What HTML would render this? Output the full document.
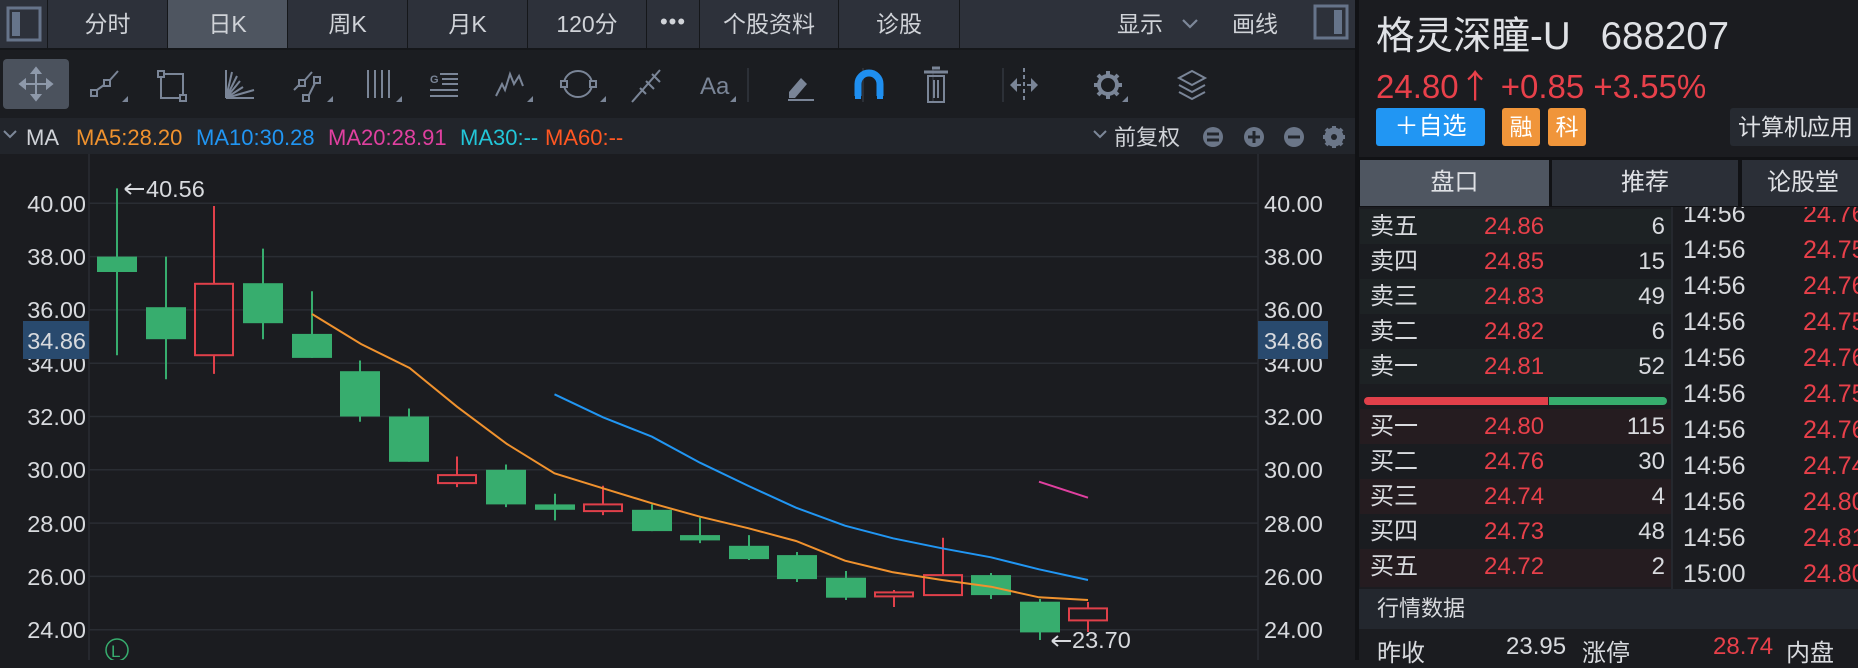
<!DOCTYPE html>
<html><head><meta charset="utf-8"><style>
*{margin:0;padding:0;box-sizing:border-box}
body{width:1858px;height:660px;background:#1b1c20;overflow:hidden;position:relative;font-family:"Liberation Sans","Noto Sans CJK SC",sans-serif;color:#d8dade}
.abs{position:absolute}
.tab{position:absolute;top:0;height:48px;background:#2d313a;color:#d0d3d8;font-size:23px;line-height:48px;text-align:center}
.r{color:#e8404a}
.row{position:absolute;left:1360px;width:311px;height:35px;font-size:24px;line-height:35px}
.row .l{position:absolute;left:10px}
.row .p{position:absolute;left:124px;color:#e8404a}
.row .v{position:absolute;right:6px}
.tr{position:relative;font-size:25px;height:36px;line-height:36px;width:200px}
.tr .p{position:absolute;left:120px;color:#e8404a}
</style></head><body>
<div class="abs" style="left:0;top:0;width:1359px;height:50px;background:#15171a"></div>
<div class="tab" style="left:0;width:47px"></div>
<svg class="abs" style="left:6px;top:6px" width="36" height="36"><rect x="2" y="2" width="32" height="32" fill="none" stroke="#66748a" stroke-width="3"/><rect x="6" y="6" width="8" height="24" fill="#66748a"/></svg>
<div class="tab" style="left:48px;width:119px">分时</div>
<div class="tab" style="left:168px;width:119px;background:#4e5560">日K</div>
<div class="tab" style="left:288px;width:119px">周K</div>
<div class="tab" style="left:408px;width:119px">月K</div>
<div class="tab" style="left:528px;width:118px">120分</div>
<div class="tab" style="left:647px;width:52px;font-size:22px;letter-spacing:1px;line-height:44px">•••</div>
<div class="tab" style="left:700px;width:138px">个股资料</div>
<div class="tab" style="left:839px;width:120px">诊股</div>
<div class="tab" style="left:960px;width:399px"></div>
<div class="abs" style="left:1117px;top:0;line-height:48px;font-size:23px;color:#d0d3d8">显示</div>
<svg class="abs" style="left:1180px;top:16px" width="20" height="16"><path d="M3 4 L10 11 L17 4" fill="none" stroke="#7d8899" stroke-width="2.2"/></svg>
<div class="abs" style="left:1232px;top:0;line-height:48px;font-size:23px;color:#d0d3d8">画线</div>
<svg class="abs" style="left:1313px;top:4px" width="38" height="38"><rect x="2" y="2" width="32" height="32" fill="none" stroke="#66748a" stroke-width="3"/><rect x="21" y="6" width="8" height="24" fill="#66748a"/></svg>

<div class="abs" style="left:0;top:50px;width:1359px;height:68px;background:#1b1d21"></div>
<div class="abs" style="left:3px;top:59px;width:66px;height:50px;background:#4b525d;border-radius:4px"></div>
<svg class="abs" style="left:0;top:50px" width="1359" height="68" fill="none" stroke="#7a8597" stroke-width="2">
<g stroke="#8e99aa"><path d="M20 34H52M36 18V50"/><path d="M20 34l5-4v8zM52 34l-5-4v8zM36 18l-4 5h8zM36 50l-4-5h8z" fill="#8e99aa"/></g>
<rect x="91" y="40" width="6" height="6"/><rect x="104" y="30" width="6" height="6"/><path d="M97 40l7-5M110 30l8-9"/><path d="M122 52h6v-6z" fill="#7a8597" stroke="none"/>
<rect x="158" y="21" width="6" height="6"/><rect x="180" y="45" width="6" height="6"/><path d="M164 24h19v21M161 27v21h19"/>
<path d="M226 48V20M226 48l6-26M226 48l11-22M226 48l14-17M226 48l17-11M226 48h28" /><path d="M226 48l28-8" />
<rect x="299" y="30" width="6" height="6"/><rect x="314" y="27" width="6" height="6"/><rect x="303" y="45" width="6" height="6"/><path d="M294 40l5-5M305 30l7-8M309 45l6-12"/><path d="M327 52h6v-6z" fill="#7a8597" stroke="none"/>
<path d="M368 20v28M375 20v28M382 20v28M389 20v28"/><path d="M396 52h6v-6z" fill="#7a8597" stroke="none"/>
<text x="430" y="33" font-size="11" fill="#7a8597" stroke="none" font-weight="bold" font-family="Liberation Sans">G</text><path d="M440 24h18M442 29h16M442 34h16M430 40h28M430 46h28"/>
<path d="M496 46l6-12 3 6 5-16 4 10 5-8 4 10"/><path d="M527 52h6v-6z" fill="#7a8597" stroke="none"/>
<ellipse cx="578" cy="34" rx="14" ry="13"/><rect x="561" y="31" width="6" height="6" fill="#1b1d21"/><rect x="590" y="31" width="6" height="6" fill="#1b1d21"/><path d="M600 52h6v-6z" fill="#7a8597" stroke="none"/>
<path d="M632 52l28-32M640 38l6 6M646 31l8 8M652 24l8 8"/>
<text x="700" y="44" font-size="24" fill="#7a8597" stroke="none" font-family="Liberation Sans">Aa</text><path d="M730 52h6v-6z" fill="#7a8597" stroke="none"/>
<path d="M748 18v34M863 18v34M933 18v34M1003 18v34" stroke="#2c3037"/>
<path d="M789 42l12-14 6 6-12 14h-6z" fill="#7a8597" stroke="none"/><path d="M788 50h26"/>
<path d="M858 46v-12a10 10 0 0 1 22 0v12" stroke="#1f8ff0" stroke-width="7"/><rect x="855" y="44" width="6" height="5" fill="#1f8ff0" stroke="none"/><rect x="877" y="44" width="6" height="5" fill="#1f8ff0" stroke="none"/>
<path d="M924 22h24M932 18h8" stroke-width="3"/><path d="M928 26h16v26h-16z"/><path d="M934 30v18M938 30v18" />
<path d="M1024 18v34" stroke-dasharray="4 3"/><path d="M1010 35l7-7v14zM1038 35l-7-7v14z" fill="#7a8597" stroke="none"/><path d="M1017 35h4M1027 35h4"/>
<circle cx="1108" cy="35" r="9" stroke-width="4"/><g stroke-width="4"><path d="M1108 21v5M1108 44v5M1094 35h5M1117 35h5M1098 25l3 3M1115 42l3 3M1098 45l3-3M1115 28l3-3"/></g><path d="M1122 52h6v-6z" fill="#7a8597" stroke="none"/>
<path d="M1192 21l13 7-13 7-13-7z"/><path d="M1179 35l13 7 13-7M1179 42l13 7 13-7"/>
</svg>

<div class="abs" style="left:0;top:118px;width:1359px;height:36px;background:#22252b"></div>
<svg class="abs" style="left:0;top:118px" width="1359" height="36">
<path d="M4 13l6 6 6-6" fill="none" stroke="#7d8899" stroke-width="2"/>
<g font-family="Liberation Sans" font-size="22">
<text x="26" y="27" fill="#d0d3d8">MA</text>
<text x="76" y="27" fill="#f0922e">MA5:28.20</text>
<text x="196" y="27" fill="#2196f3">MA10:30.28</text>
<text x="328" y="27" fill="#e040a0">MA20:28.91</text>
<text x="460" y="27" fill="#22c6d8">MA30:--</text>
<text x="545" y="27" fill="#ff5722">MA60:--</text>
<text x="1114" y="27" fill="#d0d3d8" font-family="Liberation Sans,Noto Sans CJK SC,sans-serif" font-size="22">前复权</text>
</g>
<path d="M1094 13l6 6 6-6" fill="none" stroke="#7d8899" stroke-width="2"/>
<g fill="#6b7688"><circle cx="1213" cy="19" r="10"/><circle cx="1254" cy="19" r="10"/><circle cx="1294" cy="19" r="10"/></g>
<g stroke="#22252b" stroke-width="3"><path d="M1207 16h12M1207 22h12M1248 19h12M1254 13v12M1288 19h12"/></g>
<circle cx="1334" cy="19" r="7" fill="none" stroke="#6b7688" stroke-width="5"/><g stroke="#6b7688" stroke-width="4"><path d="M1334 8v22M1323 19h22M1326 11l16 16M1326 27l16-16"/></g><circle cx="1334" cy="19" r="3" fill="#22252b"/>
</svg>

<svg class="abs" style="left:0;top:0" width="1359" height="660">
<g stroke="#2a2d33" stroke-width="1.5">
<path d="M89 203.3H1258M89 256.6H1258M89 309.9H1258M89 363.2H1258M89 416.5H1258M89 469.8H1258M89 523.1H1258M89 576.4H1258M89 629.7H1258"/>
<path d="M89 154V660M1258 154V660"/>
</g>
<g font-family="Liberation Sans" font-size="23.5" fill="#d8dade">
<text x="86" y="212" text-anchor="end">40.00</text>
<text x="86" y="265" text-anchor="end">38.00</text>
<text x="86" y="318" text-anchor="end">36.00</text>
<text x="86" y="372" text-anchor="end">34.00</text>
<text x="86" y="425" text-anchor="end">32.00</text>
<text x="86" y="478" text-anchor="end">30.00</text>
<text x="86" y="532" text-anchor="end">28.00</text>
<text x="86" y="585" text-anchor="end">26.00</text>
<text x="86" y="638" text-anchor="end">24.00</text>
<text x="1264" y="212">40.00</text>
<text x="1264" y="265">38.00</text>
<text x="1264" y="318">36.00</text>
<text x="1264" y="372">34.00</text>
<text x="1264" y="425">32.00</text>
<text x="1264" y="478">30.00</text>
<text x="1264" y="532">28.00</text>
<text x="1264" y="585">26.00</text>
<text x="1264" y="638">24.00</text>
</g>
<rect x="23" y="321" width="66" height="38" fill="#294a6e"/>
<rect x="1258" y="321" width="70" height="38" fill="#294a6e"/>
<g font-family="Liberation Sans" font-size="23.5" fill="#d8dade">
<text x="86" y="349" text-anchor="end">34.86</text>
<text x="1264" y="349">34.86</text>
<text x="146" y="197">40.56</text>
<text x="1072" y="648">23.70</text>
</g>
<path d="M125 189h19M125 189l6-5M125 189l6 5M1052 641h19M1052 641l6-5M1052 641l6 5" stroke="#d8dade" stroke-width="2" fill="none"/>
<circle cx="117" cy="650" r="11" fill="none" stroke="#37ad6e" stroke-width="1.5"/>
<text x="111" y="657" font-size="17" fill="#37ad6e" font-family="Liberation Sans">L</text>
<g fill="#37ad6e" stroke="#37ad6e" stroke-width="2">
<path d="M117 188.4V355.2M166 256.6V379.2M263 248.6V339.2M312 291.2V357.9M360 360.5V421.8M409 408.5V461.8M506 464.5V507.1M555 493.8V520.4M652 504.4V531.1M700 517.8V543.1M749 535.1V560M797 552V582M846 571V600M991 573V599M1040 599V640"/>
<rect x="97" y="256.6" width="40" height="15.4" stroke="none"/>
<rect x="146" y="307.2" width="40" height="32" stroke="none"/>
<rect x="243" y="283.2" width="40" height="40" stroke="none"/>
<rect x="292" y="333.9" width="40" height="24" stroke="none"/>
<rect x="340" y="371.2" width="40" height="45.3" stroke="none"/>
<rect x="389" y="416.5" width="40" height="45.3" stroke="none"/>
<rect x="486" y="469.8" width="40" height="34.6" stroke="none"/>
<rect x="535" y="504.4" width="40" height="5.4" stroke="none"/>
<rect x="632" y="509.8" width="40" height="21.3" stroke="none"/>
<rect x="680" y="535.1" width="40" height="5.3" stroke="none"/>
<rect x="729" y="545.8" width="40" height="13.3" stroke="none"/>
<rect x="777" y="555.1" width="40" height="24" stroke="none"/>
<rect x="826" y="577.7" width="40" height="20" stroke="none"/>
<rect x="971" y="575.1" width="40" height="20" stroke="none"/>
<rect x="1020" y="601.7" width="40" height="30.7" stroke="none"/>
</g>
<g fill="none" stroke="#e0404a" stroke-width="2">
<path d="M214 206V283.8M214 355.2V373.9M457 456.5V475.1M457 483.1V487.1M603 485.8V504.4M603 511.1V515.1M894 590V592.4M894 596.4V607M943 537.8V575.1M1088 602V608.4M1088 620.4V632"/>
<rect x="195" y="283.8" width="38" height="71.4"/>
<rect x="438" y="475.1" width="38" height="8"/>
<rect x="584" y="504.4" width="38" height="6.7"/>
<rect x="875" y="592.4" width="38" height="4"/>
<rect x="924" y="575.1" width="38" height="20"/>
<rect x="1069" y="608.4" width="38" height="12"/>
</g>
<polyline fill="none" stroke="#f0922e" stroke-width="2" points="312,314 361,344 409.6,368 457,406.7 507,444 554.5,473.3 603,488.3 652,503.3 700,516.7 748.6,528.3 796,541 845,560.7 893,572.3 942,580 991,586.7 1039,597.3 1088,600"/>
<polyline fill="none" stroke="#2196f3" stroke-width="2" points="554.5,394.3 603,417.3 652,436.7 700,462.7 748.6,486 796,507.7 845,525.7 893,538.3 942,548.3 991,557.3 1039,569.3 1088,580"/>
<polyline fill="none" stroke="#e040a0" stroke-width="2" points="1039,481.7 1088,497.7"/>
</svg>

<div class="abs" style="left:1355px;top:0;width:4px;height:660px;background:#111215"></div>
<div class="abs" style="left:1376px;top:5px;font-size:38.5px;color:#dfe1e5;white-space:nowrap">格灵深瞳-U<span style="margin-left:30px">688207</span></div>
<div class="abs r" style="left:1376px;top:60px;font-size:33px;white-space:nowrap">24.80<span style="font-family:'Noto Sans CJK SC',sans-serif">↑</span> +0.85 +3.55%</div>
<div class="abs" style="left:1376px;top:108px;width:109px;height:38px;background:#2196f3;border-radius:3px;color:#fff;font-size:24px;line-height:38px;text-align:center">＋自选</div>
<div class="abs" style="left:1502px;top:108px;width:38px;height:38px;background:#f0953a;border-radius:3px;color:#fff;font-size:23px;line-height:38px;text-align:center">融</div>
<div class="abs" style="left:1548px;top:108px;width:38px;height:38px;background:#f0953a;border-radius:3px;color:#fff;font-size:23px;line-height:38px;text-align:center">科</div>
<div class="abs" style="left:1730px;top:108px;width:140px;height:38px;background:#262a31;border-radius:3px;color:#dfe1e5;font-size:23px;line-height:38px;padding-left:8px;white-space:nowrap">计算机应用</div>
<div class="abs" style="left:1359px;top:157px;width:499px;height:50px;background:#111215"></div>
<div class="abs" style="left:1360px;top:160px;width:189px;height:46px;background:#4f5661;color:#dfe1e5;font-size:24px;line-height:46px;text-align:center">盘口</div>
<div class="abs" style="left:1552px;top:160px;width:186px;height:46px;background:#2b2f37;color:#dfe1e5;font-size:24px;line-height:46px;text-align:center">推荐</div>
<div class="abs" style="left:1742px;top:160px;width:120px;height:46px;background:#2b2f37;color:#dfe1e5;font-size:24px;line-height:46px;padding-left:25px;white-space:nowrap">论股堂</div>

<div class="row" style="top:209px;background:#1d2224"><span class="l">卖五</span><span class="p">24.86</span><span class="v">6</span></div>
<div class="row" style="top:244px;background:#1a1c20"><span class="l">卖四</span><span class="p">24.85</span><span class="v">15</span></div>
<div class="row" style="top:279px;background:#1d2224"><span class="l">卖三</span><span class="p">24.83</span><span class="v">49</span></div>
<div class="row" style="top:314px;background:#1a1c20"><span class="l">卖二</span><span class="p">24.82</span><span class="v">6</span></div>
<div class="row" style="top:349px;background:#1d2224"><span class="l">卖一</span><span class="p">24.81</span><span class="v">52</span></div>
<div class="abs" style="left:1364px;top:397px;width:184px;height:8px;background:#e0404a;border-radius:4px 0 0 4px"></div>
<div class="abs" style="left:1549px;top:397px;width:118px;height:8px;background:#37ad6e;border-radius:0 4px 4px 0"></div>
<div class="row" style="top:409px;background:#251c20"><span class="l">买一</span><span class="p">24.80</span><span class="v">115</span></div>
<div class="row" style="top:444px;background:#1a1c20"><span class="l">买二</span><span class="p">24.76</span><span class="v">30</span></div>
<div class="row" style="top:479px;background:#251c20"><span class="l">买三</span><span class="p">24.74</span><span class="v">4</span></div>
<div class="row" style="top:514px;background:#1a1c20"><span class="l">买四</span><span class="p">24.73</span><span class="v">48</span></div>
<div class="row" style="top:549px;height:38px;background:#251c20"><span class="l">买五</span><span class="p">24.72</span><span class="v">2</span></div>
<div class="abs" style="left:1671px;top:207px;width:2px;height:382px;background:#25282e"></div>

<div class="abs" style="left:1673px;top:207px;width:185px;height:382px;overflow:hidden">
<div style="position:relative;top:-11px;left:10px">
<div class="tr">14:56<span class="p">24.76</span></div>
<div class="tr">14:56<span class="p">24.75</span></div>
<div class="tr">14:56<span class="p">24.76</span></div>
<div class="tr">14:56<span class="p">24.75</span></div>
<div class="tr">14:56<span class="p">24.76</span></div>
<div class="tr">14:56<span class="p">24.75</span></div>
<div class="tr">14:56<span class="p">24.76</span></div>
<div class="tr">14:56<span class="p">24.74</span></div>
<div class="tr">14:56<span class="p">24.80</span></div>
<div class="tr">14:56<span class="p">24.81</span></div>
<div class="tr">15:00<span class="p">24.80</span></div>
</div></div>

<div class="abs" style="left:1359px;top:589px;width:499px;height:40px;background:#23272e;font-size:22px;line-height:40px;padding-left:18px">行情数据</div>
<div class="abs" style="left:1377px;top:633px;font-size:24px;white-space:nowrap">昨收</div>
<div class="abs" style="left:1506px;top:633px;font-size:24px">23.95</div>
<div class="abs" style="left:1582px;top:633px;font-size:24px">涨停</div>
<div class="abs r" style="left:1713px;top:633px;font-size:24px">28.74</div>
<div class="abs" style="left:1786px;top:633px;font-size:24px">内盘</div>
</body></html>
